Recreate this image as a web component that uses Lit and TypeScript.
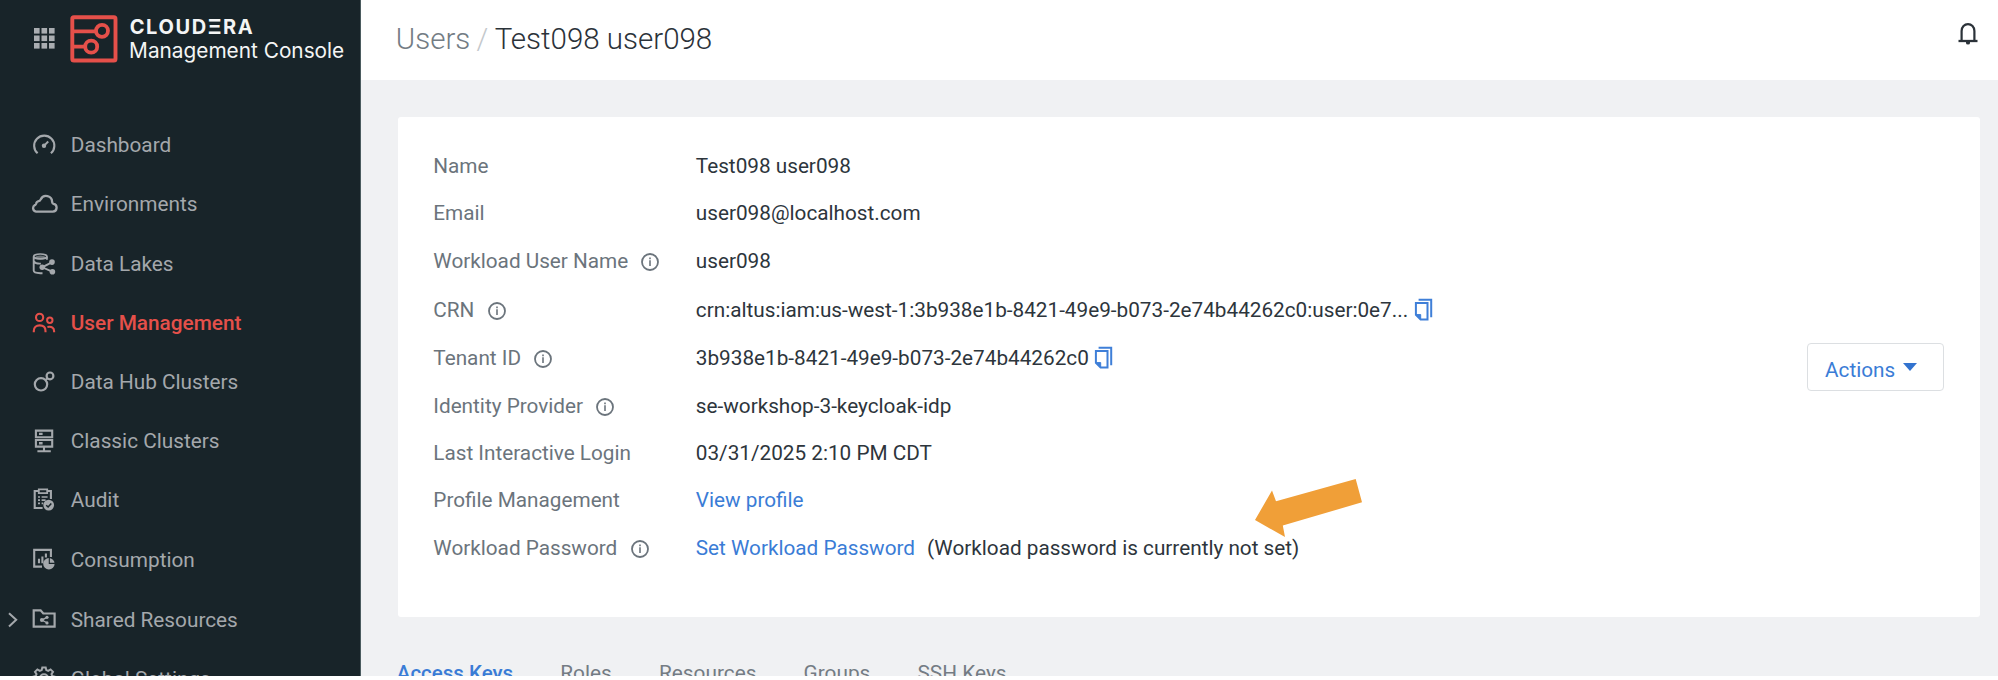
import { LitElement, html, css, svg, nothing, type TemplateResult } from "lit";
import { customElement, property } from "lit/decorators.js";
import { classMap } from "lit/directives/class-map.js";

const ICONS: Record<string, TemplateResult> = {
  dashboard: svg`
    <path d="M7.6 22.3A10.1 10.1 0 1 1 20.9 22.3" stroke-width="2.1"/>
    <circle cx="14" cy="14.8" r="2.2" fill="currentColor" stroke="none"/>
    <path d="M14.4 14.4l3.8-3.9" stroke-width="2"/>`,
  cloud: svg`
    <path d="M6 21.6h16.4a3.9 3.9 0 0 0 1.1-7.7c-1-.3-1.2-.8-1.4-1.8A6 6 0 0 0 10.7 9.4c-.5 1.2-.8 1.5-2 1.7-2 .3-2.4 1.5-2.7 2.9-.2.6-.5.8-1.1 1.1A3.5 3.5 0 0 0 6 21.6z" stroke-width="2.3"/>`,
  lake: svg`
    <ellipse cx="10.3" cy="6.4" rx="6.6" ry="2.4" stroke-width="1.7"/>
    <path d="M3.7 6.4v14.2c0 1.5 2.7 2.6 6.6 2.6h2.2M16.9 6.4v3.4M3.9 11.4c1 1.6 4 2.4 7 2.2M21.8 12.3l-9.6 5 10 4.4" stroke-width="1.9"/>
    <ellipse cx="10.3" cy="7.6" rx="5.6" ry="2" fill="currentColor" stroke="none" opacity=".6"/>
    <g fill="currentColor" stroke="none"><circle cx="22" cy="12.1" r="2.8"/><circle cx="12.2" cy="17.3" r="2.7"/><circle cx="22.4" cy="21.8" r="2.8"/></g>`,
  users: svg`
    <circle cx="9.6" cy="8.4" r="3.6" stroke-width="2.1"/><circle cx="19.8" cy="11.2" r="2.7" stroke-width="2"/>
    <path d="M3.8 23.2v-1.3c0-3.6 2.4-5.5 5.9-5.5s5.8 1.9 5.8 5.5v1.3M17.4 18c4.6-.9 6.7 1 6.7 4.2v1" stroke-width="2.1"/>`,
  hub: svg`<circle cx="11" cy="16.3" r="6.2" stroke-width="2.2"/><circle cx="20" cy="7.9" r="3.4" stroke-width="2.2"/><path d="M15.6 12l2-1.8" stroke-width="2.2"/>`,
  servers: svg`
    <path d="M5.9 3.6h16.3v6.6H5.9zM5.9 13h16.3v6.6H5.9zM14 19.6v4.6M7.4 24.3h13.4" stroke-width="2.1"/>
    <path d="M9 6.9h3.6M9 16.3h3.6" stroke-width="2.4"/>`,
  audit: svg`
    <path d="M12.6 22H4.7V5h3.8M17.5 5h3.4v8" stroke-width="2.1"/>
    <path d="M8.8 3.4h8.4v3.8H8.8z" stroke-width="1.8"/>
    <path d="M8 11h2M11.6 11h6M8 14.2h2M11.6 14.2h4M8 17.4h2M11.6 17.4h1.6" stroke-width="1.7"/>
    <circle cx="18.7" cy="19.1" r="5.4" fill="currentColor" stroke="none"/>
    <path class="cut" d="M16.2 19.2l1.9 1.8 3.2-3.6" stroke-width="1.5"/>`,
  consumption: svg`
    <path d="M12 20.6H4.2V3.9h16.7v7" stroke-width="2.1"/>
    <path d="M9 12.8v4.4M12.4 10.5v6.7M15.9 7.6v4" stroke-width="2.1"/>
    <circle cx="18.9" cy="17.8" r="5.7" fill="currentColor" stroke="none"/>
    <path class="cut" d="M19.3 11.6v5.8h5.6" stroke-width="1.1"/>`,
  folder: svg`
    <path d="M3.7 20.7V4.3h6.9l2.7 3.2h11.3v13.2z" stroke-width="2.2"/>
    <path d="M17.3 11.2l-5.4 2.9 5.4 2.9" stroke-width="1.4"/>
    <g fill="currentColor" stroke="none"><circle cx="17" cy="11.3" r="1.6"/><circle cx="11.9" cy="14.1" r="2"/><circle cx="17" cy="16.9" r="1.6"/></g>`,
  gear: svg`
    <path d="M12.3 2.4h3.4l.6 2.7 1.9.8 2.4-1.5 2.4 2.4-1.5 2.4.8 1.9 2.7.6v3.4l-2.7.6-.8 1.9 1.5 2.4-2.4 2.4-2.4-1.5-1.9.8-.6 2.7h-3.4l-.6-2.7-1.9-.8-2.4 1.5L5 20l1.5-2.4-.8-1.9-2.7-.6v-3.4l2.7-.6.8-1.9L5 6.8l2.4-2.4 2.4 1.5 1.9-.8z" stroke-width="2"/>
    <circle cx="14" cy="13.4" r="4.1" stroke-width="2"/>`,
};

@customElement("nav-item")
class NavItem extends LitElement {
  @property() label = "";
  @property() icon = "";
  @property({ type: Boolean }) active = false;
  @property({ type: Boolean }) expandable = false;

  static styles = css`
    :host { display: block; flex: none; }
    .item { display: flex; align-items: center; height: 59.2px; padding-left: 7px; color: #a4a8ac; font-size: 20.77px; line-height: 24px; white-space: nowrap; }
    .item.active { color: #e5504a; font-weight: 500; }
    .chevron { width: 12px; height: 18px; margin-right: 10.6px; fill: none; stroke: currentColor; flex: none; }
    .icon { width: 28px; height: 28px; margin-right: 13.2px; fill: none; stroke: currentColor; flex: none; }
    .cut { stroke: #182429; }
  `;

  render() {
    return html`<div class=${classMap({ item: true, active: this.active })}>
      <svg class="chevron" viewBox="0 0 12 18">${this.expandable ? svg`<path d="M2 2.2l7.2 6.6L2 15.6" stroke-width="2"/>` : nothing}</svg>
      <svg class="icon" viewBox="0 0 28 28">${ICONS[this.icon]}</svg>
      <span>${this.label}</span>
    </div>`;
  }
}

@customElement("side-bar")
class SideBar extends LitElement {
  static styles = css`
    :host { display: flex; flex-direction: column; flex: none; box-sizing: border-box; width: 361px; height: 676px; overflow: hidden; background: #182429; border-right: 1px solid #4b5b5f; }
    .brand { display: flex; flex: none; height: 115.6px; padding: 14.5px 0 0 34px; box-sizing: border-box; }
    .apps { width: 21px; height: 21px; margin-top: 13.5px; fill: #a9adb1; flex: none; }
    .logo { width: 48px; height: 48px; margin-left: 15.2px; fill: none; stroke: #e5504a; flex: none; }
    .names { display: flex; flex-direction: column; margin-left: 11.5px; color: #f4f5f5; font-family: Inter, sans-serif; white-space: nowrap; }
    .company { font-size: 20px; font-weight: 700; letter-spacing: 1.6px; line-height: 24px; }
    .product { font-size: 20.8px; line-height: 24px; margin-left: -0.6px; }
    .spaced { margin-top: 1.2px; }
  `;

  render() {
    const cells = [0, 7.5, 15];
    return html`
      <div class="brand">
        <svg class="apps" viewBox="0 0 21 21">${cells.map((y) => cells.map((x) => svg`<rect x=${x} y=${y} width="5.6" height="5.6"/>`))}</svg>
        <svg class="logo" viewBox="0 0 48 48">
          <rect x="2.3" y="2.3" width="43.2" height="43.2" rx="1.6" stroke-width="3.9"/>
          <circle cx="32" cy="15.8" r="6" stroke-width="3.8"/><circle cx="21.2" cy="31.7" r="6" stroke-width="3.8"/>
          <path d="M3 16.4h22.6M3 31.6h12" stroke-width="3.6"/>
        </svg>
        <div class="names"><span class="company">CLOUDΞRA</span><span class="product">Management Console</span></div>
      </div>
      <nav-item icon="dashboard" label="Dashboard"></nav-item>
      <nav-item icon="cloud" label="Environments"></nav-item>
      <nav-item icon="lake" label="Data Lakes"></nav-item>
      <nav-item icon="users" label="User Management" active></nav-item>
      <nav-item icon="hub" label="Data Hub Clusters"></nav-item>
      <nav-item icon="servers" label="Classic Clusters"></nav-item>
      <nav-item icon="audit" label="Audit"></nav-item>
      <nav-item icon="consumption" label="Consumption"></nav-item>
      <nav-item class="spaced" icon="folder" label="Shared Resources" expandable></nav-item>
      <nav-item icon="gear" label="Global Settings"></nav-item>
    `;
  }
}

interface Row {
  label: string;
  value: string;
  info?: boolean;
  copy?: boolean;
  link?: boolean;
  note?: string;
  extra?: string;
}

const ROWS: Row[] = [
  { label: "Name", value: "Test098 user098" },
  { label: "Email", value: "user098@localhost.com" },
  { label: "Workload User Name", value: "user098", info: true },
  { label: "CRN", value: "crn:altus:iam:us-west-1:3b938e1b-8421-49e9-b073-2e74b44262c0:user:0e7...", info: true, copy: true, extra: "two" },
  { label: "Tenant ID", value: "3b938e1b-8421-49e9-b073-2e74b44262c0", info: true, copy: true, extra: "one" },
  { label: "Identity Provider", value: "se-workshop-3-keycloak-idp", info: true },
  { label: "Last Interactive Login", value: "03/31/2025 2:10 PM CDT" },
  { label: "Profile Management", value: "View profile", link: true },
  { label: "Workload Password", value: "Set Workload Password", info: true, link: true, note: "(Workload password is currently not set)" },
];

@customElement("user-details")
class UserDetails extends LitElement {
  static styles = css`
    :host { display: flex; justify-content: space-between; box-sizing: border-box; height: 500px; margin: 37px 18px 0 36.5px; padding: 25.5px 36px 0 35.8px; background: #fff; border-radius: 3px; font-size: 20.74px; line-height: 24px; white-space: nowrap; }
    .row { display: flex; align-items: center; height: 47.3px; }
    .row.two { padding-top: 2px; }
    .row.one { padding-top: 1px; }
    .label { display: flex; align-items: center; width: 262.5px; color: #6b747c; }
    .info { width: 18px; height: 18px; margin: 2px 0 0 13.2px; fill: none; stroke: currentColor; }
    .value { color: #2d353c; }
    .value.link { color: #3a7cd6; }
    .copy { width: 19px; height: 23px; margin: -2px 0 0 5.6px; fill: none; stroke: #3f7fd8; }
    .note { margin-left: 12px; color: #2d353c; }
    .actions { display: flex; box-sizing: border-box; width: 137.3px; height: 47.5px; margin-top: 200.5px; padding: 14px 0 0 17.3px; border: 1.4px solid #dcdfe2; border-radius: 4px; background: #fff; color: #3a7cd6; font: inherit; line-height: 24px; }
    .caret { width: 14px; height: 8px; margin: 4.5px 0 0 7.8px; fill: #3273cf; }
  `;

  render() {
    return html`
      <div>
        ${ROWS.map((r) => html`<div class="row ${r.extra ?? ""}">
          <div class="label">${r.label}${r.info ? html`<svg class="info" viewBox="0 0 18 18"><circle cx="9" cy="9" r="8" stroke-width="1.8"/><path d="M9 7.3v5.8M9 4.6v1.6" stroke-width="1.6"/></svg>` : nothing}</div>
          <span class=${classMap({ value: true, link: !!r.link })}>${r.value}</span>
          ${r.copy ? html`<svg class="copy" viewBox="0 0 19 23"><path d="M4.6 1.7h12.6v17.6" stroke-width="2"/><path d="M1.9 5h11.6v16.4H6.6l-4.7-4.6z" stroke-width="2"/><path d="M2 16.6h4.7v4.6z" fill="#3f7fd8" stroke-width="1"/></svg>` : nothing}
          ${r.note ? html`<span class="note">${r.note}</span>` : nothing}
        </div>`)}
      </div>
      <div class="actions">Actions<svg class="caret" viewBox="0 0 14 8"><path d="M0 0h14L7 8z"/></svg></div>
    `;
  }
}

@customElement("app-root")
class AppRoot extends LitElement {
  static styles = css`
    :host { display: block; position: relative; height: 680px; overflow: hidden; background: #fff; font-family: Roboto, sans-serif; }
    .shell { display: flex; height: 676px; overflow: hidden; }
    .main { flex: 1; min-width: 0; background: #f0f1f3; overflow: hidden; }
    .top { display: flex; align-items: center; justify-content: space-between; height: 80px; padding: 0 20px 0 34.8px; box-sizing: border-box; background: #fff; }
    .crumbs { display: flex; margin-top: -2px; font-size: 29.5px; font-weight: 300; line-height: 36px; color: #737c84; white-space: nowrap; }
    .slash { margin: 0 6.3px; color: #c4c8cc; }
    .current { color: #2b3239; }
    .bell { width: 20px; height: 23px; margin-top: -13px; fill: none; stroke: #2b3239; }
    .tabs { display: flex; gap: 47.2px; padding: 44.2px 0 0 35.8px; font-size: 20.8px; line-height: 24px; color: #747c84; white-space: nowrap; }
    .tab.active { color: #3a7cd6; font-weight: 500; font-size: 20.5px; }
    .pointer { position: absolute; left: 1254px; top: 478px; width: 110px; height: 60px; fill: #f09f38; }
  `;

  render() {
    return html`
      <div class="shell">
        <side-bar></side-bar>
        <div class="main">
          <div class="top">
            <div class="crumbs"><span>Users</span><span class="slash">/</span><span class="current">Test098 user098</span></div>
            <svg class="bell" viewBox="0 0 20 23"><path d="M3.6 18.6V9a6.4 6.9 0 0 1 12.8 0v9.6" stroke-width="2.2"/><path d="M.5 19h19" stroke-width="2.3"/><path d="M8 20h4v1a2 1.6 0 0 1-4 0z" fill="#2b3239" stroke="none"/></svg>
          </div>
          <user-details></user-details>
          <div class="tabs">
            <span class="tab active">Access Keys</span><span class="tab">Roles</span><span class="tab">Resources</span><span class="tab">Groups</span><span class="tab">SSH Keys</span>
          </div>
        </div>
      </div>
      <svg class="pointer" viewBox="1254 478 110 60"><path d="M1255 520L1272 490.5L1276 501.2L1355.7 479L1362 502.3L1282.8 525.5L1285 537z"/></svg>
    `;
  }
}
